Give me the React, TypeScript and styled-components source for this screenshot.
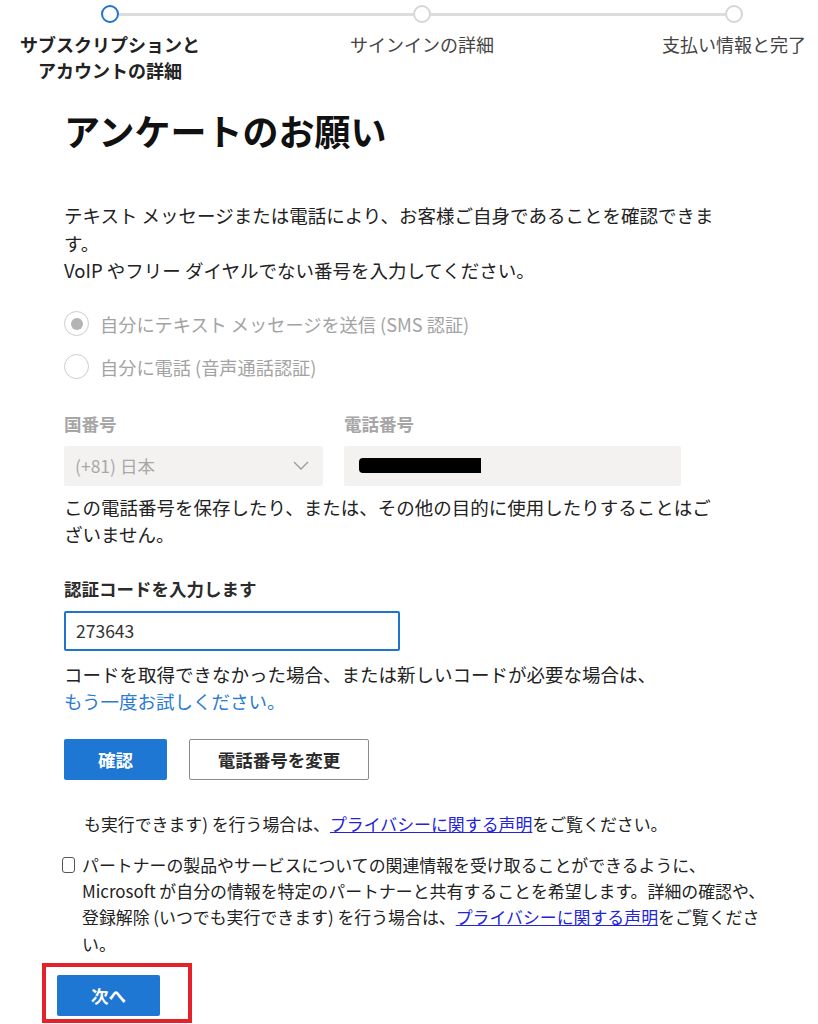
import React from 'react';
import styled, { createGlobalStyle } from 'styled-components';

const GlobalStyle = createGlobalStyle`
    html, body {
        margin: 0;
        padding: 0;
        background: #ffffff;
        overflow-x: hidden;
    }
    body {
        font-family: "Noto Sans CJK JP", "Noto Sans", "Liberation Sans", sans-serif;
        color: #1b1b1b;
    }
`;

const Page = styled.div`
    width: 818px;
    min-height: 1024px;
    overflow: hidden;
`;

const Stepper = styled.div`
    padding-top: 5px;
`;

const StepTrack = styled.div`
    display: flex;
    align-items: center;
    padding-left: 101px;
`;

const StepDot = styled.span<{ $active?: boolean }>`
    box-sizing: border-box;
    width: 18px;
    height: 18px;
    border-radius: 50%;
    border: 2px solid ${props => props.$active ? '#1f74d0' : '#d6d6d6'};
    background: #fff;
    flex: none;
`;

const StepLine = styled.span`
    width: 294px;
    height: 3px;
    background: #dcdcdc;
    flex: none;
`;

const StepLabels = styled.div`
    display: flex;
    gap: 92px;
    margin-top: 8px;
`;

const StepLabel = styled.div<{ $active?: boolean }>`
    width: 220px;
    flex: none;
    text-align: center;
    font-size: 18px;
    line-height: 26px;
    font-weight: ${props => props.$active ? 700 : 400};
    color: ${props => props.$active ? '#222' : '#444'};
`;

const Content = styled.main`
    padding-left: 64px;
    width: 730px;
`;

const Title = styled.h1`
    margin: 23px 0 0;
    font-size: 36px;
    line-height: 48px;
    font-weight: 700;
    color: #111;
`;

const Text = styled.p<{ $top?: number }>`
    margin: ${props => props.$top ?? 0}px 0 0;
    font-size: 18.5px;
    line-height: 27.5px;
    color: #222;
    white-space: nowrap;
`;

const RadioGroup = styled.div`
    display: flex;
    flex-direction: column;
    gap: 13px;
    margin-top: 24px;
`;

const RadioRow = styled.label`
    display: flex;
    align-items: center;
    gap: 11px;
    height: 30px;
    font-size: 18.2px;
    color: #a3a3a3;
`;

const RadioCircle = styled.span<{ $checked?: boolean }>`
    box-sizing: border-box;
    width: 25px;
    height: 25px;
    border-radius: 50%;
    border: 1.5px solid #cdcdcd;
    display: flex;
    align-items: center;
    justify-content: center;

    &::after {
        content: '';
        width: 12px;
        height: 12px;
        border-radius: 50%;
        background: ${props => props.$checked ? '#b4b4b4' : 'transparent'};
    }
`;

const PhoneRow = styled.div`
    display: flex;
    gap: 21px;
    margin-top: 29px;
`;

const Field = styled.div<{ $width: number }>`
    width: ${props => props.$width}px;
    display: flex;
    flex-direction: column;
    gap: 9px;
`;

const FieldLabel = styled.div<{ $muted?: boolean; $top?: number }>`
    margin-top: ${props => props.$top ?? 0}px;
    font-size: 17.5px;
    line-height: 26px;
    font-weight: 700;
    color: ${props => props.$muted ? '#a6a6a6' : '#2b2b2b'};
`;

const DisabledBox = styled.div`
    box-sizing: border-box;
    height: 40px;
    background: #f3f2f1;
    border-radius: 2px;
    display: flex;
    align-items: center;
    justify-content: space-between;
    padding: 0 14px 0 11px;
    font-size: 17.5px;
    color: #a8a8a8;
`;

const Redaction = styled.span`
    width: 122px;
    height: 15px;
    background: #000;
    border-radius: 4px 0 0 4px;
    margin-left: 4px;
`;

const CodeInput = styled.div`
    box-sizing: border-box;
    width: 336px;
    height: 40px;
    margin-top: 9px;
    border: 2px solid #1f74d0;
    border-radius: 2px;
    display: flex;
    align-items: center;
    padding-left: 10px;
    font-size: 17.5px;
    color: #333;
`;

const Link = styled.a`
    color: #2b7bd3;
    text-decoration: none;
`;

const ButtonRow = styled.div`
    display: flex;
    gap: 22px;
    margin-top: 23px;
`;

const Button = styled.button<{ $variant: 'primary' | 'secondary'; $width: number }>`
    box-sizing: border-box;
    width: ${props => props.$width}px;
    height: 41px;
    border-radius: 2px;
    font-family: inherit;
    font-size: 17.5px;
    font-weight: 700;
    cursor: pointer;
    background: ${props => props.$variant === 'primary' ? '#1d77d3' : '#fff'};
    color: ${props => props.$variant === 'primary' ? '#fff' : '#2b2b2b'};
    border: ${props => props.$variant === 'primary' ? 'none' : '1px solid #8c8c8c'};
`;

const Consent = styled.div`
    font-size: 16.9px;
    line-height: 26.3px;
    color: #222;
    white-space: nowrap;
`;

const ConsentTail = styled.p`
    margin: 31px 0 0;
    padding-left: 20px;
`;

const CheckRow = styled.div`
    display: flex;
    gap: 7px;
    margin-top: 15px;
`;

const CheckBox = styled.span`
    box-sizing: border-box;
    width: 13px;
    height: 16px;
    border: 1.5px solid #555;
    border-radius: 3px;
    margin: 5px 0 0 -2px;
    flex: none;
`;

const PrivacyLink = styled.a`
    color: #2323d8;
    text-decoration: underline;
`;

const Highlight = styled.div`
    width: 150px;
    box-sizing: border-box;
    margin: 6px 0 0 -22px;
    border: 4px solid #e5212b;
    padding: 8px 11px 3px;
`;

export default function App() {
    return (
        <Page>
            <GlobalStyle />
            <Stepper>
                <StepTrack>
                    <StepDot $active />
                    <StepLine />
                    <StepDot />
                    <StepLine />
                    <StepDot />
                </StepTrack>
                <StepLabels>
                    <StepLabel $active>サブスクリプションと<br />アカウントの詳細</StepLabel>
                    <StepLabel>サインインの詳細</StepLabel>
                    <StepLabel>支払い情報と完了</StepLabel>
                </StepLabels>
            </Stepper>

            <Content>
                <Title>アンケートのお願い</Title>

                <Text $top={48}>
                    テキスト メッセージまたは電話により、お客様ご自身であることを確認できま<br />
                    す。<br />
                    VoIP やフリー ダイヤルでない番号を入力してください。
                </Text>

                <RadioGroup>
                    <RadioRow>
                        <RadioCircle $checked />
                        自分にテキスト メッセージを送信 (SMS 認証)
                    </RadioRow>
                    <RadioRow>
                        <RadioCircle />
                        自分に電話 (音声通話認証)
                    </RadioRow>
                </RadioGroup>

                <PhoneRow>
                    <Field $width={259}>
                        <FieldLabel $muted>国番号</FieldLabel>
                        <DisabledBox>
                            (+81) 日本
                            <svg width="16" height="9" viewBox="0 0 16 9">
                                <path d="M1 1l7 7 7-7" fill="none" stroke="#9a9a9a" strokeWidth="1.3" />
                            </svg>
                        </DisabledBox>
                    </Field>
                    <Field $width={337}>
                        <FieldLabel $muted>電話番号</FieldLabel>
                        <DisabledBox>
                            <Redaction />
                        </DisabledBox>
                    </Field>
                </PhoneRow>

                <Text $top={8}>
                    この電話番号を保存したり、または、その他の目的に使用したりすることはご<br />
                    ざいません。
                </Text>

                <FieldLabel $top={27}>認証コードを入力します</FieldLabel>
                <CodeInput>273643</CodeInput>

                <Text $top={10}>
                    コードを取得できなかった場合、または新しいコードが必要な場合は、<br />
                    <Link href="#">もう一度お試しください。</Link>
                </Text>

                <ButtonRow>
                    <Button $variant="primary" $width={103}>確認</Button>
                    <Button $variant="secondary" $width={180}>電話番号を変更</Button>
                </ButtonRow>

                <Consent>
                    <ConsentTail>
                        も実行できます) を行う場合は、<PrivacyLink href="#">プライバシーに関する声明</PrivacyLink>をご覧ください。
                    </ConsentTail>
                    <CheckRow>
                        <CheckBox />
                        <div>
                            パートナーの製品やサービスについての関連情報を受け取ることができるように、<br />
                            Microsoft が自分の情報を特定のパートナーと共有することを希望します。詳細の確認や、<br />
                            登録解除 (いつでも実行できます) を行う場合は、<PrivacyLink href="#">プライバシーに関する声明</PrivacyLink>をご覧くださ<br />
                            い。
                        </div>
                    </CheckRow>
                </Consent>

                <Highlight>
                    <Button $variant="primary" $width={103}>次へ</Button>
                </Highlight>
            </Content>
        </Page>
    );
}
